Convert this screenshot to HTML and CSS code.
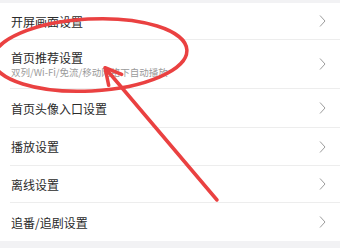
FILE: index.html
```html
<!DOCTYPE html>
<html lang="zh-CN">
<head>
<meta charset="utf-8">
<link rel="stylesheet" href="styles.css">
</head>
<body>
<div class="page">
  <ul class="list">
    <li class="row h37"><span class="title">开屏画面设置</span><svg class="chev" viewBox="0 0 7 12" width="7" height="12"><polyline points="1,0.5 6,6 1,11.5"/></svg></li>
    <li class="row h49"><div class="texts"><span class="title">首页推荐设置</span><span class="sub">双列/Wi-Fi/免流/移动网络下自动播放</span></div><svg class="chev" viewBox="0 0 7 12" width="7" height="12"><polyline points="1,0.5 6,6 1,11.5"/></svg></li>
    <li class="row h39"><span class="title">首页头像入口设置</span><svg class="chev" viewBox="0 0 7 12" width="7" height="12"><polyline points="1,0.5 6,6 1,11.5"/></svg></li>
    <li class="row h38"><span class="title">播放设置</span><svg class="chev" viewBox="0 0 7 12" width="7" height="12"><polyline points="1,0.5 6,6 1,11.5"/></svg></li>
    <li class="row h37"><span class="title">离线设置</span><svg class="chev" viewBox="0 0 7 12" width="7" height="12"><polyline points="1,0.5 6,6 1,11.5"/></svg></li>
    <li class="row h38 last"><span class="title">追番/追剧设置</span><svg class="chev" viewBox="0 0 7 12" width="7" height="12"><polyline points="1,0.5 6,6 1,11.5"/></svg></li>
  </ul>
  <svg class="marks" viewBox="0 0 340 248" width="340" height="248">
    <ellipse cx="90" cy="55" rx="97" ry="36" transform="rotate(-3 90 55)"/>
    <line x1="217" y1="200" x2="106" y2="69"/>
    <polyline points="121.7,74.4 105,67.7 108.7,85.3"/>
  </svg>
</div>
</body>
</html>
```
FILE: styles.css
```css
* { box-sizing: border-box; }
html, body { margin: 0; padding: 0; }
body {
  background: #f2f2f4;
  font-family: "Noto Sans CJK SC", "Noto Sans", sans-serif;
  width: 340px;
  height: 248px;
  overflow: hidden;
}
.page {
  position: relative;
  width: 340px;
  height: 248px;
  padding-top: 3px;
}
.list {
  list-style: none;
  margin: 0;
  padding: 0;
  background: #fff;
}
.row {
  display: flex;
  align-items: center;
  justify-content: space-between;
  margin-left: 10px;
  padding-left: 1px;
  padding-right: 14px;
  border-bottom: 1px solid #ededed;
}
.row.last { border-bottom: none; }
.h37 { height: 37px; }
.h38 { height: 38px; }
.h39 { height: 39px; }
.h49 { height: 49px; }
.texts {
  display: flex;
  flex-direction: column;
  gap: 1px;
}
.title {
  font-size: 12px;
  line-height: 15px;
  color: #2a2a2a;
}
.sub {
  font-size: 9.5px;
  line-height: 13px;
  color: #9a9a9a;
}
.chev {
  display: block;
  fill: none;
  stroke: #9c9c9c;
  stroke-width: 1;
}
.marks {
  position: absolute;
  left: 0;
  top: 0;
  fill: none;
  stroke: #ea4141;
  stroke-width: 3.5;
  stroke-linecap: round;
  stroke-linejoin: round;
}
```
